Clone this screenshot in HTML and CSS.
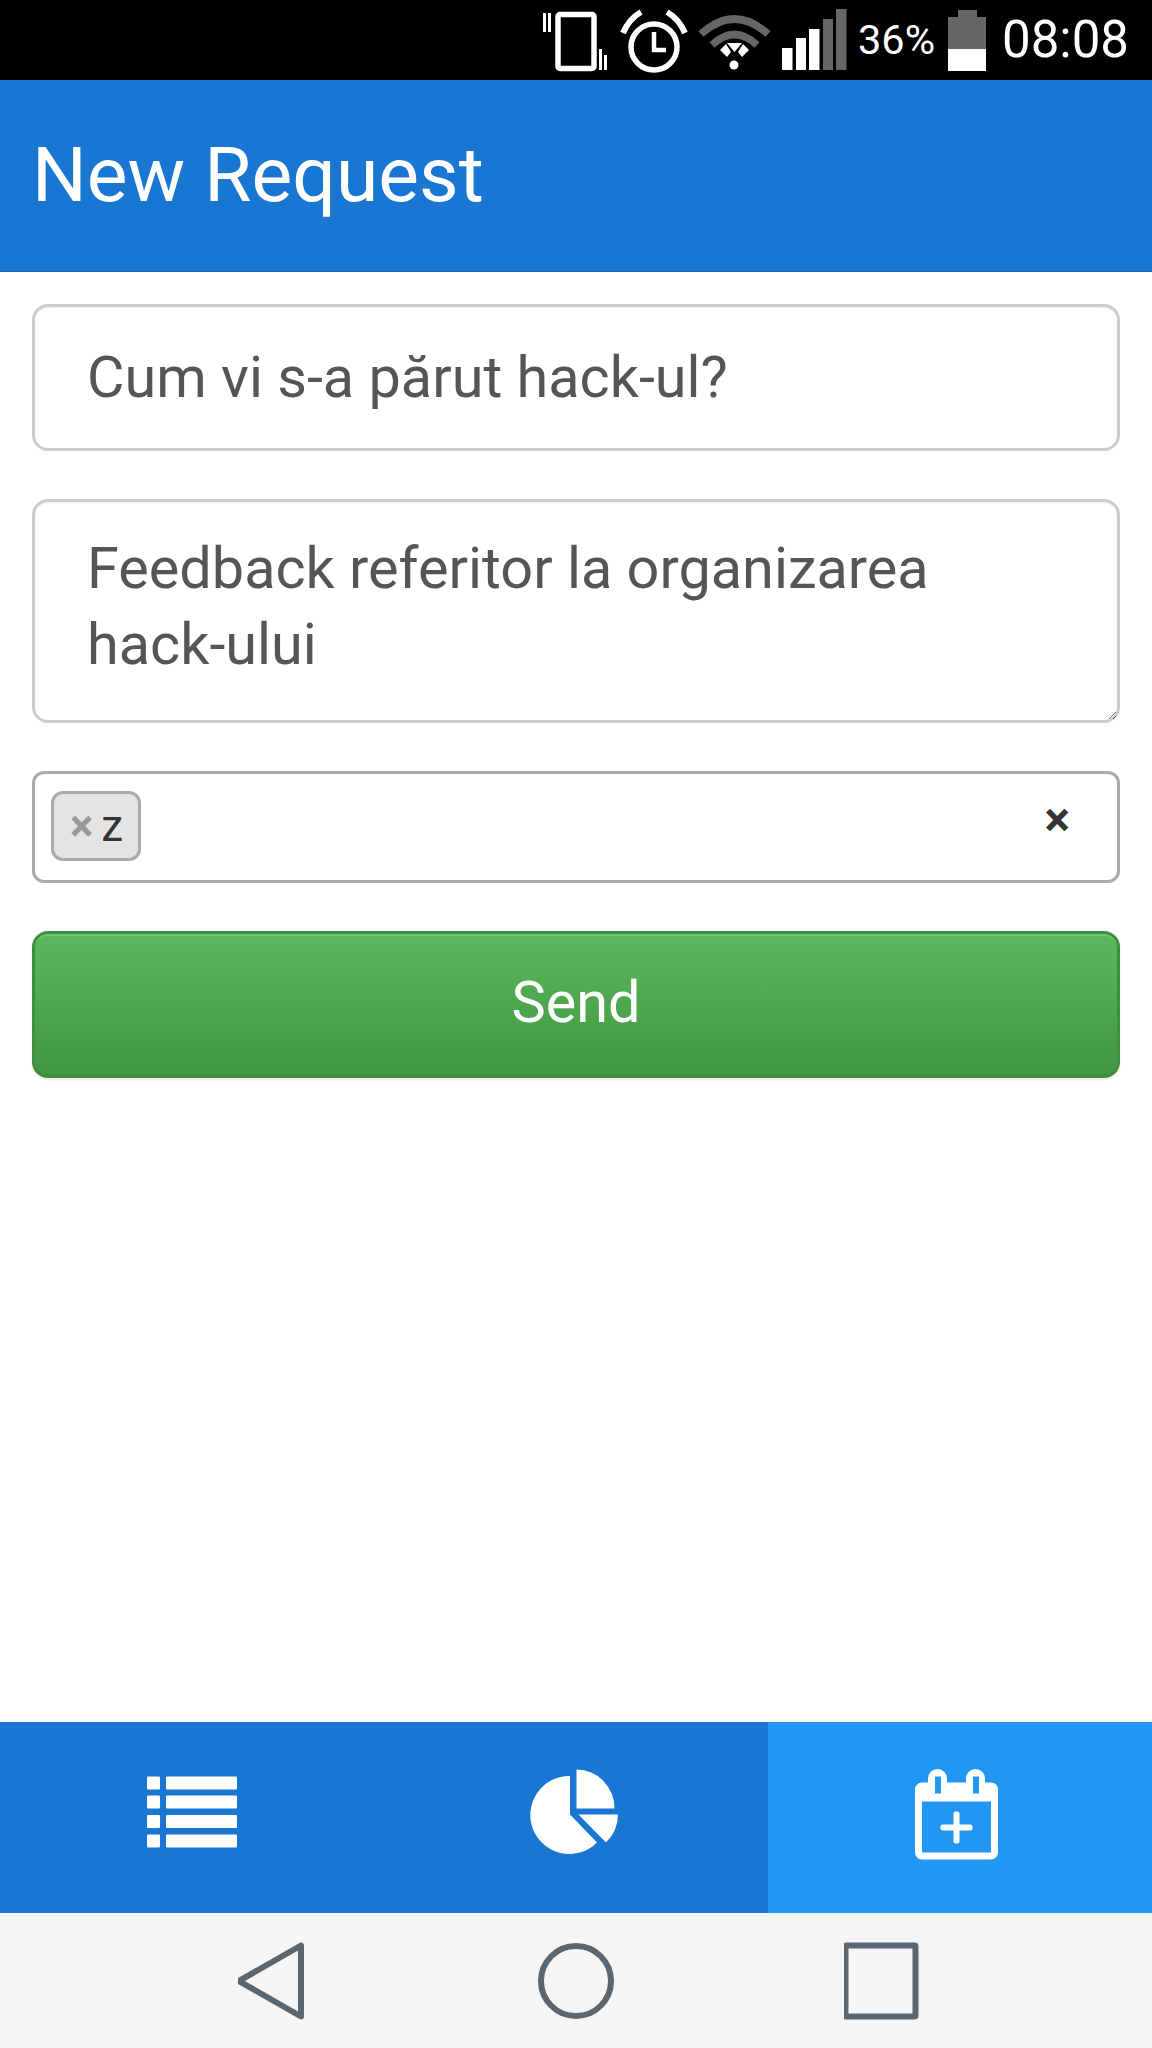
FILE: index.html
```html
<!DOCTYPE html>
<html lang="ro">
<head>
    <meta charset="UTF-8">
    <meta name="viewport" content="width=device-width, initial-scale=1.0">
    <title>New Request</title>
    <link rel="stylesheet" href="styles.css">
</head>

<body>
    <!-- Status bar -->
    <div class="statusbar">
        <svg class="status-icons" width="320" height="80" viewBox="536 0 320 80">
            <!-- vibrate -->
            <rect x="558" y="14.500" width="36" height="54" rx="2" fill="none" stroke="#fff" stroke-width="5.500"/>
            <rect x="543" y="13" width="3" height="19" fill="#fff"/>
            <rect x="548" y="13" width="3" height="19" fill="#fff"/>
            <rect x="599" y="49" width="3" height="21" fill="#fff"/>
            <rect x="604" y="55" width="3" height="15" fill="#fff"/>
            <!-- alarm -->
            <circle cx="654" cy="47" r="23" fill="none" stroke="#fff" stroke-width="5.500"/>
            <path d="M654 32V50H666" fill="none" stroke="#fff" stroke-width="4.500"/>
            <path d="M623 33Q629 19 641 12M685 33Q679 19 667 12" fill="none" stroke="#fff" stroke-width="6"/>
            <!-- wifi -->
            <path d="M701 34Q734.500 4 768 34M712 45Q734.500 24 757 45" fill="none" stroke="#666" stroke-width="7.500"/>
            <path d="M727 43H742L734.500 52Z" fill="#fff"/>
            <path d="M720 50L726 44L731 52L727 57Z" fill="#fff"/>
            <path d="M749 50L743 44L738 52L742 57Z" fill="#fff"/>
            <circle cx="734" cy="65" r="4.500" fill="#fff"/>
            <!-- signal -->
            <rect x="782" y="48" width="10.500" height="22" fill="#fff"/>
            <rect x="796" y="38" width="10" height="32" fill="#fff"/>
            <rect x="809" y="29" width="10.500" height="41" fill="#fff"/>
            <rect x="823" y="19" width="10" height="51" fill="#666"/>
            <rect x="836" y="9" width="10.500" height="61" fill="#666"/>
        </svg>
        <span class="battery-text">36%</span>
        <div class="battery">
            <div class="battery-nub"></div>
            <div class="battery-empty"></div>
            <div class="battery-full"></div>
        </div>
        <span class="clock">08:08</span>
    </div>

    <!-- Header -->
    <header class="header">
        <h1 class="header-title">New Request</h1>
    </header>

    <!-- Form -->
    <form class="form">
        <input class="field field-title" type="text" value="Cum vi s-a părut hack-ul?">
        <textarea class="field field-text" rows="2">Feedback referitor la organizarea hack-ului</textarea>

        <div class="select">
            <span class="tag"><span class="tag-remove">×</span>z</span>
            <span class="select-clear">×</span>
        </div>

        <button class="send" type="button">Send</button>
    </form>

    <!-- Bottom tabs -->
    <nav class="tabs">
        <a class="tab">
            <svg width="100" height="100" viewBox="142 1767.500 100 100" fill="#fff">
                <rect x="147" y="1776" width="13" height="13" rx="1"/>
                <rect x="166" y="1776" width="71" height="13" rx="1"/>
                <rect x="147" y="1795" width="13" height="13" rx="1"/>
                <rect x="166" y="1795" width="71" height="13" rx="1"/>
                <rect x="147" y="1814.500" width="13" height="13" rx="1"/>
                <rect x="166" y="1814.500" width="71" height="13" rx="1"/>
                <rect x="147" y="1834" width="13" height="13" rx="1"/>
                <rect x="166" y="1834" width="71" height="13" rx="1"/>
            </svg>
        </a>
        <a class="tab">
            <svg width="100" height="100" viewBox="526 1767.500 100 100" fill="#fff">
                <path d="M570 1775.500A39 39 0 1 0 597 1842L570 1814Z"/>
                <path d="M576.500 1769A38.500 38.500 0 0 1 614.500 1808H576.500Z"/>
                <path d="M578.500 1814H618A39 39 0 0 1 606 1842Z"/>
            </svg>
        </a>
        <a class="tab tab-active">
            <svg width="100" height="100" viewBox="910 1767.500 100 100" fill="#fff">
                <path fill-rule="evenodd" d="M922 1782H928V1778A9 9 0 0 1 947 1778V1782H966V1778A9 9 0 0 1 985 1778V1782H991A7 7 0 0 1 998 1789V1852A7 7 0 0 1 991 1859H922A7 7 0 0 1 915 1852V1789A7 7 0 0 1 922 1782ZM922 1801V1852H991V1801ZM935 1776V1793H941V1776ZM973 1776V1793H979V1776Z"/>
                <rect x="953.500" y="1811" width="6" height="32" rx="2"/>
                <rect x="940.500" y="1824" width="32" height="6" rx="2"/>
            </svg>
        </a>
    </nav>

    <!-- Android buttons -->
    <div class="softkeys">
        <svg width="70" height="78" viewBox="240 1941.500 70 78">
            <path d="M303 1945V2016L241 1980.500Z" fill="none" stroke="#5a6670" stroke-width="6" stroke-linejoin="round"/>
        </svg>
        <svg width="76" height="78" viewBox="0 0 76 78">
            <circle cx="38" cy="39" r="35" fill="none" stroke="#5a6670" stroke-width="6"/>
        </svg>
        <svg width="76" height="78" viewBox="1.500 0 76 78">
            <rect x="3" y="3.500" width="70" height="71" rx="1" fill="none" stroke="#5a6670" stroke-width="6"/>
        </svg>
    </div>
</body>

</html>
```

FILE: styles.css
```css
* {
    margin: 0;
    padding: 0;
    box-sizing: border-box;
}

body {
    display: flex;
    flex-direction: column;
    height: 2048px;
    background-color: #fff;
    font-family: Roboto, sans-serif;
    overflow: hidden;
}

/* Status bar */
.statusbar {
    display: flex;
    align-items: center;
    height: 80px;
    padding-left: 536px;
    background-color: #000;
    color: #fff;
}

.status-icons {
    flex-shrink: 0;
}

.battery-text {
    width: 90px;
    margin-left: 2px;
    font-size: 41.500px;
    line-height: 80px;
}

.battery {
    display: flex;
    flex-direction: column;
    align-items: center;
    width: 38px;
    height: 61px;
}

.battery-nub {
    width: 19px;
    height: 7px;
    background-color: #666;
}

.battery-empty {
    width: 38px;
    height: 32px;
    background-color: #666;
}

.battery-full {
    width: 38px;
    height: 22px;
    background-color: #fff;
}

.clock {
    margin-left: 16px;
    font-size: 51px;
    line-height: 80px;
}

/* Header */
.header {
    display: flex;
    align-items: center;
    height: 192px;
    padding: 0 0 2px 32px;
    background-color: #1976d2;
    border-bottom: 1px solid #1565c0;
}

.header-title {
    color: #fff;
    font-size: 76.800px;
    font-weight: 400;
}

/* Form */
.form {
    flex-grow: 1;
    display: flex;
    flex-direction: column;
    gap: 48px;
    padding: 32px 32px 0;
}

.field {
    width: 100%;
    padding: 0 52px;
    border: 3px solid #ccc;
    border-radius: 16px;
    background-color: #fff;
    color: #555;
    font-family: Roboto, sans-serif;
    font-size: 57.600px;
    box-shadow: inset 0 1px 1px rgba(0, 0, 0, 0.075);
    outline: none;
}

.field-title {
    height: 147px;
}

.field-text {
    height: 224px;
    padding-top: 29px;
    line-height: 76px;
    overflow: hidden;
}

.select {
    display: flex;
    align-items: center;
    justify-content: space-between;
    height: 112px;
    padding: 0 47px 0 16px;
    border: 3px solid #aaa;
    border-radius: 12px;
}

.tag {
    display: flex;
    align-items: center;
    gap: 8px;
    height: 70px;
    margin-bottom: 2px;
    padding: 0 15px 0 16px;
    background-color: #e4e4e4;
    border: 3px solid #aaa;
    border-radius: 12px;
    color: #333;
    font-size: 44px;
}

.tag-remove {
    color: #999;
    font-weight: 700;
}

.select-clear {
    padding-bottom: 16px;
    color: #333;
    font-size: 48px;
    font-weight: 700;
}

.send {
    height: 147px;
    padding-bottom: 5px;
    border: 3px solid #3e8f3e;
    border-radius: 16px;
    background-image: linear-gradient(to bottom, #5cb85c, #419641);
    color: #fff;
    font-family: Roboto, sans-serif;
    font-size: 57.600px;
    box-shadow: inset 0 2px 0 rgba(255, 255, 255, 0.15), 0 2px 3px rgba(0, 0, 0, 0.075);
}

/* Bottom tabs */
.tabs {
    display: grid;
    grid-template-columns: repeat(3, 1fr);
    height: 191px;
    background-color: #1976d2;
}

.tab {
    display: flex;
    align-items: center;
    justify-content: center;
}

.tab-active {
    background-color: #2196f3;
}

/* Android buttons */
.softkeys {
    display: flex;
    align-items: center;
    gap: 230px;
    height: 135px;
    padding-left: 238px;
    background-color: #f5f5f5;
}
```
